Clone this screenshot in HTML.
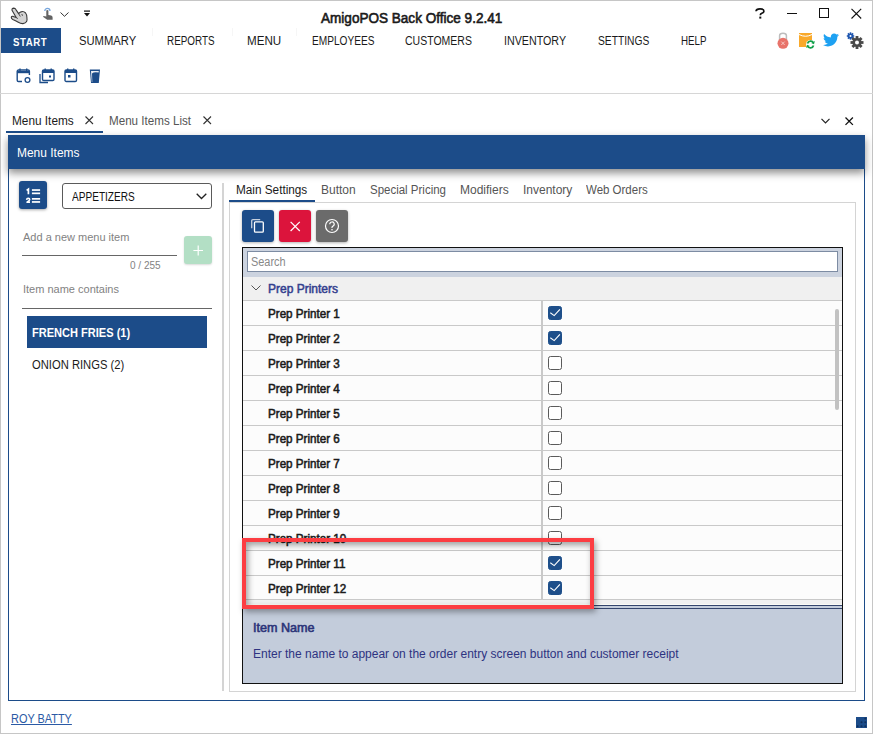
<!DOCTYPE html>
<html><head><meta charset="utf-8">
<style>
*{margin:0;padding:0;box-sizing:border-box}
html,body{width:873px;height:734px;overflow:hidden;background:#fff;font-family:"Liberation Sans",sans-serif;color:#000}
.a{position:absolute;white-space:nowrap}
#win{position:absolute;left:0;top:0;width:873px;height:734px;border:1px solid #c6c6c6}
.menu{font-size:12.5px;color:#1a1a1a;top:34px}
.sep{position:absolute;top:28px;width:1px;height:8px;background:#f6f6f6}
.tab2{font-size:12.5px;color:#555}
.row{position:absolute;left:243px;width:599px;height:25px;background:#fcfcfc;border-bottom:1px solid #c9c9c9}
.row .t{position:absolute;left:25px;top:6px;transform:scaleX(0.97);transform-origin:0 0;font-size:12px;color:#1b1b1b;-webkit-text-stroke:0.55px #1b1b1b}
.cb{position:absolute;left:305px;top:5px;width:14px;height:14px;border:1.5px solid #5a5a5a;border-radius:2.5px;background:#fff}
.cb.on{background:#1e4f8a;border-color:#1e4f8a}
</style></head><body>
<div id="win"></div>

<!-- title bar -->
<svg class="a" style="left:8px;top:5px" width="24" height="22" viewBox="0 0 24 22">
 <path d="M4 5.2 Q3.8 3.2 5.8 3.1 Q7.2 3.1 7.9 4.6 L10.6 8.6 Q12 6.8 13.8 6.6 Q16 6.3 17.6 8 Q18.9 9.6 18.9 12.5 Q19.3 15 18.6 16.6 Q17.6 18.4 15 18.6 Q12.5 18.7 10.3 17.3 Q7.5 15.6 4.8 14.4 Q3.2 13.6 3.3 12.2 Q3.6 11 5.2 11.4 L8.2 12.6 Z" fill="#d4d4d4" stroke="#3a3a3a" stroke-width="1.1" stroke-linejoin="round"/>
 <path d="M10.6 8.6 L12.3 11.5 M13.8 9 L14.5 10.8 M8.2 12.6 L9.8 13.6" fill="none" stroke="#3a3a3a" stroke-width="0.9"/>
</svg>
<svg class="a" style="left:42px;top:6px" width="12" height="15" viewBox="0 0 12 15">
 <path d="M2.8 5 A2.6 2.6 0 0 1 8 5" fill="none" stroke="#78a6dc" stroke-width="1.3"/>
 <path d="M4.3 4.4 Q5.4 3.6 6.4 4.4 V9 L9.2 9.6 Q10.6 10 10.6 11.6 V13.8 H5.2 L1.3 11 Q0.8 10.3 1.6 9.9 L4.3 10.6 Z" fill="#636363"/>
</svg>
<svg class="a" style="left:60px;top:12px" width="9" height="5" viewBox="0 0 9 5"><path d="M0.5 0.5 L4.5 4.3 L8.5 0.5" fill="none" stroke="#333" stroke-width="1"/></svg>
<svg class="a" style="left:84px;top:10px" width="6" height="7" viewBox="0 0 6 7"><rect x="0" y="0.5" width="6" height="1.2" fill="#111"/><path d="M0 3 h6 l-3 3.5z" fill="#111"/></svg>

<div class="a" style="transform:scaleX(0.968);transform-origin:0 0;left:321px;top:10px;font-size:14px;color:#1a1a1a;-webkit-text-stroke:0.6px #1a1a1a">AmigoPOS Back Office 9.2.41</div>

<svg class="a" style="left:754px;top:8px" width="12" height="11" viewBox="0 0 12 11"><path d="M2 3.3 Q2.2 0.9 6 0.9 Q9.9 0.9 9.9 3.2 Q9.9 4.6 7.8 5.3 Q6.3 5.8 6.3 7.3" fill="none" stroke="#111" stroke-width="1.7"/><rect x="5.3" y="8.6" width="2" height="2" fill="#111"/></svg>
<div class="a" style="left:787px;top:13px;width:10px;height:1px;background:#111"></div>
<div class="a" style="left:819px;top:8px;width:10px;height:10px;border:1.3px solid #111"></div>
<svg class="a" style="left:851px;top:8px" width="11" height="11" viewBox="0 0 11 11"><path d="M0.5 0.8 L10.2 10.5 M10.2 0.8 L0.5 10.5" stroke="#111" stroke-width="1.1"/></svg>

<!-- menu bar -->
<div class="a" style="left:1px;top:28px;width:60px;height:25px;background:#1c4c89"></div>
<div class="a" style="transform:scaleX(0.88);transform-origin:0 0;left:13px;top:36px;font-size:11px;font-weight:bold;color:#fff;letter-spacing:0.6px">START</div>
<div class="a menu" style="transform:scaleX(0.897);transform-origin:0 0;left:79px">SUMMARY</div>
<div class="a menu" style="transform:scaleX(0.79);transform-origin:0 0;left:167px">REPORTS</div>
<div class="a menu" style="transform:scaleX(0.93);transform-origin:0 0;left:247px">MENU</div>
<div class="a menu" style="transform:scaleX(0.81);transform-origin:0 0;left:312px">EMPLOYEES</div>
<div class="a menu" style="transform:scaleX(0.84);transform-origin:0 0;left:405px">CUSTOMERS</div>
<div class="a menu" style="transform:scaleX(0.856);transform-origin:0 0;left:504px">INVENTORY</div>
<div class="a menu" style="transform:scaleX(0.82);transform-origin:0 0;left:598px">SETTINGS</div>
<div class="a menu" style="transform:scaleX(0.78);transform-origin:0 0;left:681px">HELP</div>
<div class="sep" style="left:152px"></div><div class="sep" style="left:232px"></div><div class="sep" style="left:296px"></div>

<!-- top right icons -->
<svg class="a" style="left:776px;top:32px" width="14" height="17" viewBox="0 0 14 17">
 <path d="M3.6 8 V3.6 Q3.6 1.2 7 1.2 Q10.4 1.2 10.4 3.6 V8" fill="none" stroke="#bdbdbd" stroke-width="1.5"/>
 <circle cx="7" cy="11.3" r="5.5" fill="#e8736a"/>
 <path d="M5.3 9.6 L8.7 13 M8.7 9.6 L5.3 13" stroke="#f7d0cc" stroke-width="0.9"/>
</svg>
<svg class="a" style="left:798px;top:32px" width="18" height="17" viewBox="0 0 18 17">
 <rect x="1" y="1" width="13" height="14" fill="#f9a92b"/>
 <path d="M1 2.5 Q7.5 6 14 2.5" fill="none" stroke="#fff" stroke-width="1"/>
 <circle cx="12.5" cy="12.5" r="4.5" fill="#fff"/>
 <path d="M9.5 11.5 A3.2 3.2 0 0 1 15.5 11" fill="none" stroke="#11a04a" stroke-width="1.8"/>
 <path d="M15.5 13.5 A3.2 3.2 0 0 1 9.5 14" fill="none" stroke="#11a04a" stroke-width="1.8"/>
 <path d="M16.8 9 L16 12.2 L13.2 11z" fill="#11a04a"/><path d="M8.2 16 L9 12.8 L11.8 14z" fill="#11a04a"/>
</svg>
<svg class="a" style="left:823px;top:33px" width="16" height="14" viewBox="0 0 24 20">
 <path d="M24 2.4c-.9.4-1.8.6-2.8.8 1-.6 1.8-1.6 2.2-2.7-1 .6-2 1-3.1 1.2C19.4.7 18.1.1 16.6.1c-2.7 0-4.9 2.2-4.9 4.9 0 .4 0 .8.1 1.1C7.7 5.9 4.1 4 1.7 1 1.2 1.7 1 2.6 1 3.5c0 1.7.9 3.2 2.2 4.1-.8 0-1.6-.2-2.2-.6v.1c0 2.4 1.7 4.4 3.9 4.8-.4.1-.8.2-1.3.2-.3 0-.6 0-.9-.1.6 2 2.4 3.4 4.6 3.4-1.7 1.3-3.8 2.1-6.1 2.1-.4 0-.8 0-1.2-.1 2.2 1.4 4.8 2.2 7.5 2.2 9.1 0 14-7.5 14-14v-.6c1-.7 1.8-1.6 2.5-2.5z" fill="#1da1f2"/>
</svg>
<svg class="a" style="left:846px;top:32px" width="18" height="17" viewBox="0 0 18 17">
 <g fill="#1e56b0"><circle cx="4.5" cy="4" r="2.6"/><rect x="3.7" y="0.3" width="1.6" height="7.4"/><rect x="0.8" y="3.2" width="7.4" height="1.6"/><rect x="3.7" y="0.3" width="1.6" height="7.4" transform="rotate(45 4.5 4)"/><rect x="0.8" y="3.2" width="7.4" height="1.6" transform="rotate(45 4.5 4)"/></g>
 <circle cx="4.5" cy="4" r="1" fill="#fff"/>
 <g fill="#4a4a4a"><circle cx="11" cy="10.5" r="4.6"/><rect x="9.6" y="4" width="2.8" height="13"/><rect x="4.5" y="9.1" width="13" height="2.8"/><rect x="9.6" y="4" width="2.8" height="13" transform="rotate(45 11 10.5)"/><rect x="4.5" y="9.1" width="13" height="2.8" transform="rotate(45 11 10.5)"/></g>
 <circle cx="11" cy="10.5" r="2" fill="#fff"/>
</svg>

<!-- toolbar icons -->
<svg class="a" style="left:16px;top:68px" width="16" height="16" viewBox="0 0 16 16">
 <path d="M6 13.5 H2.5 a1.3 1.3 0 0 1 -1.3 -1.3 V3.3 a1.3 1.3 0 0 1 1.3 -1.3 h9.6 a1.3 1.3 0 0 1 1.3 1.3 V7" fill="none" stroke="#1c4c89" stroke-width="1.4"/>
 <rect x="1.2" y="3" width="12.2" height="2.2" fill="#1c4c89"/>
 <rect x="3.3" y="0.5" width="1.4" height="2.5" fill="#1c4c89"/><rect x="10" y="0.5" width="1.4" height="2.5" fill="#1c4c89"/>
 <circle cx="11.5" cy="12" r="2.4" fill="none" stroke="#1c4c89" stroke-width="1.3"/>
</svg>
<svg class="a" style="left:39px;top:68px" width="16" height="16" viewBox="0 0 16 16">
 <path d="M1 6 V14.5 H9" fill="none" stroke="#1c4c89" stroke-width="1.3"/>
 <rect x="3.5" y="2" width="11.5" height="10.5" rx="1.3" fill="none" stroke="#1c4c89" stroke-width="1.4"/>
 <rect x="3.5" y="2" width="11.5" height="3" fill="#1c4c89"/>
 <rect x="5.5" y="0.5" width="1.4" height="2" fill="#1c4c89"/><rect x="11.5" y="0.5" width="1.4" height="2" fill="#1c4c89"/>
 <rect x="10" y="7.5" width="2" height="2" fill="#1c4c89"/>
</svg>
<svg class="a" style="left:64px;top:68px" width="14" height="15" viewBox="0 0 14 15">
 <rect x="1" y="2" width="11.5" height="11.5" rx="1.3" fill="none" stroke="#1c4c89" stroke-width="1.4"/>
 <rect x="1" y="2" width="11.5" height="3" fill="#1c4c89"/>
 <rect x="3" y="0.5" width="1.4" height="2" fill="#1c4c89"/><rect x="9" y="0.5" width="1.4" height="2" fill="#1c4c89"/>
 <rect x="4" y="7" width="2.5" height="2.5" fill="#1c4c89"/>
</svg>
<svg class="a" style="left:89px;top:69px" width="12" height="15" viewBox="0 0 12 15">
 <path d="M0.8 0.5 H11 L9.8 14 H2 Z" fill="#1c4c89"/>
 <path d="M2 2 H9.8 L9.6 3.5 Q5 2.5 3 4.5 L3.3 13 H2.8 Z" fill="#fff" opacity="0.9"/>
</svg>

<div class="a" style="left:0;top:93px;width:873px;height:1px;background:#d6d6d6"></div>

<!-- doc tabs -->
<div class="a" style="transform:scaleX(0.945);transform-origin:0 0;left:12px;top:114px;font-size:12.5px;color:#1a1a1a">Menu Items</div>
<svg class="a" style="left:85px;top:116px" width="9" height="9" viewBox="0 0 9 9"><path d="M0.5 0.5 L8 8 M8 0.5 L0.5 8" stroke="#333" stroke-width="1.1"/></svg>
<div class="a" style="left:6px;top:131px;width:97px;height:2px;background:#1c4c89"></div>
<div class="a tab2" style="transform:scaleX(0.93);transform-origin:0 0;left:109px;top:114px">Menu Items List</div>
<svg class="a" style="left:203px;top:116px" width="9" height="9" viewBox="0 0 9 9"><path d="M0.5 0.5 L8 8 M8 0.5 L0.5 8" stroke="#333" stroke-width="1.1"/></svg>
<svg class="a" style="left:821px;top:118px" width="9" height="6" viewBox="0 0 9 6"><path d="M0.5 0.8 L4.5 4.8 L8.5 0.8" fill="none" stroke="#222" stroke-width="1.2"/></svg>
<svg class="a" style="left:845px;top:117px" width="9" height="9" viewBox="0 0 9 9"><path d="M0.5 0.5 L7.9 7.9 M7.9 0.5 L0.5 7.9" stroke="#111" stroke-width="1.3"/></svg>

<!-- panel -->
<div class="a" style="left:8px;top:135px;width:857px;height:566px;border:1px solid #1c4c89;border-top:none"></div>
<div class="a" style="left:8px;top:135px;width:857px;height:34px;background:#1c4c89;box-shadow:0 4px 8px rgba(0,0,0,0.45)"></div>
<div class="a" style="transform:scaleX(0.957);transform-origin:0 0;left:17px;top:146px;font-size:12.5px;color:#fff">Menu Items</div>

<!-- left column -->
<div class="a" style="left:19px;top:181px;width:28px;height:28px;background:#1c4c89;border-radius:3px;box-shadow:0 1px 3px rgba(0,0,0,0.35)"></div>
<svg class="a" style="left:19px;top:181px" width="28" height="28" viewBox="0 0 28 28">
 <path d="M7.6 9.4 L9.4 8.2 V13.3" fill="none" stroke="#fff" stroke-width="1.7"/>
 <path d="M7.6 18.8 Q7.8 17.2 9.2 17.2 Q10.7 17.2 10.7 18.6 Q10.7 19.8 8 21.2 H11" fill="none" stroke="#fff" stroke-width="1.6" stroke-linejoin="round"/>
 <rect x="12.9" y="8.2" width="8.2" height="1.7" fill="#fff"/><rect x="12.9" y="11.5" width="8.2" height="1.7" fill="#fff"/>
 <rect x="12.9" y="17" width="8.2" height="1.7" fill="#fff"/><rect x="12.9" y="20.1" width="8.2" height="1.7" fill="#fff"/>
</svg>
<div class="a" style="left:62px;top:183px;width:150px;height:26px;border:1px solid #5a5a5a;border-radius:3px"></div>
<div class="a" style="transform:scaleX(0.84);transform-origin:0 0;left:72px;top:190px;font-size:12px;color:#111">APPETIZERS</div>
<svg class="a" style="left:196px;top:193px" width="11" height="7" viewBox="0 0 11 7"><path d="M0.7 0.7 L5.5 5.5 L10.3 0.7" fill="none" stroke="#222" stroke-width="1.3"/></svg>

<div class="a" style="left:23px;top:231px;font-size:11px;color:#828282">Add a new menu item</div>
<div class="a" style="left:22px;top:255px;width:155px;height:1px;background:#666"></div>
<div class="a" style="left:130px;top:260px;font-size:10px;color:#828282">0 / 255</div>
<div class="a" style="left:184px;top:236px;width:28px;height:28px;background:#b3dfc5;border-radius:3px;box-shadow:0 1px 2px rgba(0,0,0,0.15)"></div>
<svg class="a" style="left:193px;top:245px" width="11" height="11" viewBox="0 0 11 11"><path d="M5.2 0.6 V10.4 M0.4 5.5 H10" stroke="#fff" stroke-width="1.2"/></svg>

<div class="a" style="left:23px;top:283px;font-size:11px;color:#828282">Item name contains</div>
<div class="a" style="left:22px;top:308px;width:190px;height:1px;background:#666"></div>

<div class="a" style="left:27px;top:316px;width:180px;height:32px;background:#1c4c89"></div>
<div class="a" style="transform:scaleX(0.92);transform-origin:0 0;left:32px;top:326px;font-size:12px;font-weight:bold;color:#fff">FRENCH FRIES (1)</div>
<div class="a" style="transform:scaleX(0.935);transform-origin:0 0;left:32px;top:358px;font-size:12px;color:#1a1a1a">ONION RINGS (2)</div>

<div class="a" style="left:222px;top:183px;width:2px;height:508px;background:#d4d4d4"></div>

<!-- right tabs -->
<div class="a" style="transform:scaleX(0.98);transform-origin:0 0;left:236px;top:183px;font-size:12px;color:#1a1a1a">Main Settings</div>
<div class="a tab2" style="left:321px;top:183px;font-size:12px">Button</div>
<div class="a tab2" style="transform:scaleX(0.957);transform-origin:0 0;left:370px;top:183px;font-size:12px">Special Pricing</div>
<div class="a tab2" style="left:460px;top:183px;font-size:12px">Modifiers</div>
<div class="a tab2" style="left:523px;top:183px;font-size:12px">Inventory</div>
<div class="a tab2" style="transform:scaleX(0.957);transform-origin:0 0;left:586px;top:183px;font-size:12px">Web Orders</div>
<div class="a" style="left:229px;top:202px;width:627px;height:490px;border:1px solid #d4d4d4"></div>
<div class="a" style="left:229px;top:200px;width:86px;height:2px;background:#1c4c89"></div>

<div class="a" style="left:242px;top:210px;width:32px;height:32px;background:#1c4c89;border-radius:3px;box-shadow:0 1px 3px rgba(0,0,0,0.3)"></div>
<svg class="a" style="left:250px;top:218px" width="16" height="16" viewBox="0 0 16 16">
 <path d="M1.7 10.2 V2.9 Q1.7 1.7 2.9 1.7 H10.2" fill="none" stroke="#c5cfdd" stroke-width="1.3"/>
 <rect x="4.5" y="3.8" width="8.8" height="10.4" rx="1" fill="none" stroke="#fff" stroke-width="1.3"/>
</svg>
<div class="a" style="left:279px;top:210px;width:32px;height:32px;background:#dc143c;border-radius:3px;box-shadow:0 1px 3px rgba(0,0,0,0.3)"></div>
<svg class="a" style="left:290px;top:221px" width="11" height="11" viewBox="0 0 11 11"><path d="M0.6 0.8 L9.8 10 M9.8 0.8 L0.6 10" stroke="#fff" stroke-width="1.2"/></svg>
<div class="a" style="left:316px;top:210px;width:32px;height:32px;background:#6b6b6b;border-radius:3px;box-shadow:0 1px 3px rgba(0,0,0,0.3)"></div>
<svg class="a" style="left:324px;top:218px" width="16" height="16" viewBox="0 0 16 16">
 <circle cx="8" cy="8" r="6.5" fill="none" stroke="#fff" stroke-width="1.2"/>
 <path d="M5.8 6.3 A2.2 2.2 0 1 1 8.6 8.3 Q8 8.6 8 9.6 V10" fill="none" stroke="#fff" stroke-width="1.2"/>
 <circle cx="8" cy="11.8" r="0.8" fill="#fff"/>
</svg>

<!-- property grid -->
<div class="a" style="left:242px;top:247px;width:601px;height:437px;border:1px solid #111;background:#fcfcfc"></div>
<div class="a" style="left:243px;top:248px;width:599px;height:29px;background:#ccd3df"></div>
<div class="a" style="left:247px;top:251px;width:591px;height:21px;background:#fff;border:1px solid #7d8ca3"></div>
<div class="a" style="transform:scaleX(0.91);transform-origin:0 0;left:251px;top:255px;font-size:12px;color:#888">Search</div>
<div class="a" style="left:243px;top:277px;width:599px;height:24px;background:#f0f0f0;border-bottom:1px solid #c9c9c9"></div>
<svg class="a" style="left:251px;top:285px" width="10" height="6" viewBox="0 0 10 6"><path d="M0.5 0.5 L5 5 L9.5 0.5" fill="none" stroke="#555" stroke-width="1"/></svg>
<div class="a" style="transform:scaleX(1);transform-origin:0 0;left:268px;top:282px;font-size:12px;color:#34408f;-webkit-text-stroke:0.5px #34408f">Prep Printers</div>

<div class="row" style="top:301px"><div class="t">Prep Printer 1</div><div class="cb on"><svg style="position:absolute;left:-1.5px;top:-1.5px" width="14" height="14" viewBox="0 0 14 14"><path d="M2.3 6.8 L6.2 9.6 L11.9 3.3" fill="none" stroke="#fff" stroke-width="1.15"/></svg></div></div>
<div class="row" style="top:326px"><div class="t">Prep Printer 2</div><div class="cb on"><svg style="position:absolute;left:-1.5px;top:-1.5px" width="14" height="14" viewBox="0 0 14 14"><path d="M2.3 6.8 L6.2 9.6 L11.9 3.3" fill="none" stroke="#fff" stroke-width="1.15"/></svg></div></div>
<div class="row" style="top:351px"><div class="t">Prep Printer 3</div><div class="cb"></div></div>
<div class="row" style="top:376px"><div class="t">Prep Printer 4</div><div class="cb"></div></div>
<div class="row" style="top:401px"><div class="t">Prep Printer 5</div><div class="cb"></div></div>
<div class="row" style="top:426px"><div class="t">Prep Printer 6</div><div class="cb"></div></div>
<div class="row" style="top:451px"><div class="t">Prep Printer 7</div><div class="cb"></div></div>
<div class="row" style="top:476px"><div class="t">Prep Printer 8</div><div class="cb"></div></div>
<div class="row" style="top:501px"><div class="t">Prep Printer 9</div><div class="cb"></div></div>
<div class="row" style="top:526px"><div class="t">Prep Printer 10</div><div class="cb"></div></div>
<div class="row" style="top:551px"><div class="t">Prep Printer 11</div><div class="cb on"><svg style="position:absolute;left:-1.5px;top:-1.5px" width="14" height="14" viewBox="0 0 14 14"><path d="M2.3 6.8 L6.2 9.6 L11.9 3.3" fill="none" stroke="#fff" stroke-width="1.15"/></svg></div></div>
<div class="row" style="top:576px;height:24px"><div class="t">Prep Printer 12</div><div class="cb on"><svg style="position:absolute;left:-1.5px;top:-1.5px" width="14" height="14" viewBox="0 0 14 14"><path d="M2.3 6.8 L6.2 9.6 L11.9 3.3" fill="none" stroke="#fff" stroke-width="1.15"/></svg></div></div>
<div class="a" style="left:541px;top:301px;width:2px;height:298px;background:#c9c9c9"></div>
<div class="a" style="left:835px;top:309px;width:4px;height:101px;background:#c2c2c2;border-radius:2px"></div>
<div class="a" style="left:243px;top:600px;width:599px;height:4px;background:#f0f0f0"></div><div class="a" style="left:243px;top:604px;width:599px;height:1px;background:#fafaf5"></div>
<div class="a" style="left:243px;top:605px;width:599px;height:78px;background:#c3ccdb;border-top:1px solid #34456d"></div>
<div class="a" style="left:243px;top:608px;width:599px;height:1px;background:#34456d"></div>
<div class="a" style="transform:scaleX(1.05);transform-origin:0 0;left:253px;top:621px;font-size:12px;color:#2b3378;-webkit-text-stroke:0.55px #2b3378">Item Name</div>
<div class="a" style="left:253px;top:647px;font-size:12px;color:#2e3381">Enter the name to appear on the order entry screen button and customer receipt</div>

<!-- highlight -->
<div class="a" style="left:242px;top:538px;width:352px;height:71px;border:4px solid #fc3d42;box-shadow:2px 3px 6px rgba(0,0,0,0.35), inset 2px 3px 6px rgba(0,0,0,0.38)"></div>

<!-- footer -->
<div class="a" style="transform:scaleX(0.91);transform-origin:0 0;left:11px;top:712px;font-size:12px;color:#2b5aa5;text-decoration:underline">ROY BATTY</div>
<svg class="a" style="left:856px;top:717px" width="11" height="11" viewBox="0 0 11 11"><rect width="11" height="11" fill="#1c4c89"/><g fill="#0f2f5c"><circle cx="9.3" cy="1.5" r="1"/><circle cx="5.5" cy="5.3" r="1"/><circle cx="9.3" cy="5.3" r="1"/><circle cx="1.6" cy="9.3" r="1"/><circle cx="5.5" cy="9.3" r="1"/><circle cx="9.3" cy="9.3" r="1"/></g></svg>


</body></html>
